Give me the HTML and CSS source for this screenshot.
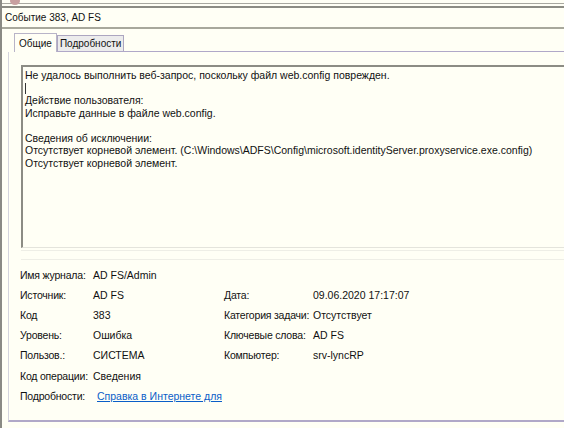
FILE: index.html
```html
<!DOCTYPE html>
<html lang="ru">
<head>
<meta charset="utf-8">
<link rel="stylesheet" href="styles.css">
</head>
<body>
<div class="window">
  <div class="topbar"><span class="dot"></span></div>
  <div class="title">Событие 383, AD FS</div>
  <div class="tabs">
    <div class="tab active">Общие</div>
    <div class="tab">Подробности</div>
  </div>
  <div class="panel">
    <div class="textbox">
      <div class="line">Не удалось выполнить веб-запрос, поскольку файл web.config поврежден.</div>
      <div class="line"><span class="caret"></span></div>
      <div class="line">Действие пользователя:</div>
      <div class="line">Исправьте данные в файле web.config.</div>
      <div class="line">&nbsp;</div>
      <div class="line">Сведения об исключении:</div>
      <div class="line">Отсутствует корневой элемент. (C:\Windows\ADFS\Config\microsoft.identityServer.proxyservice.exe.config)</div>
      <div class="line">Отсутствует корневой элемент.</div>
    </div>
    <div class="sep"></div>
    <div class="info">
      <div class="lbl">Имя журнала:</div><div class="val">AD FS/Admin</div><div></div><div></div>
      <div class="lbl">Источник:</div><div class="val">AD FS</div><div class="lbl">Дата:</div><div class="val">09.06.2020 17:17:07</div>
      <div class="lbl">Код</div><div class="val">383</div><div class="lbl">Категория задачи:</div><div class="val">Отсутствует</div>
      <div class="lbl">Уровень:</div><div class="val">Ошибка</div><div class="lbl">Ключевые слова:</div><div class="val">AD FS</div>
      <div class="lbl">Пользов.:</div><div class="val">СИСТЕМА</div><div class="lbl">Компьютер:</div><div class="val">srv-lyncRP</div>
      <div class="lbl">Код операции:</div><div class="val">Сведения</div><div></div><div></div>
      <div class="lbl">Подробности:</div><div class="val"><a class="link" href="#">Справка в Интернете для</a></div><div></div><div></div>
    </div>
  </div>
</div>
</body>
</html>
```
FILE: styles.css
```css
html, body {
  margin: 0;
  padding: 0;
  background: #fffff5;
  font-family: "Liberation Sans", Arial, sans-serif;
  font-size: 10.5px;
  color: #111;
  overflow: hidden;
}
.window {
  width: 564px;
  height: 428px;
  box-sizing: border-box;
  border-left: 2px solid #8a8a84;
  position: relative;
  overflow: hidden;
}
.topbar {
  height: 8px;
  border-top: 3px solid #fffff5;
  box-sizing: border-box;
  border-bottom: 2px solid #8c8c84;
  position: relative;
  box-shadow: inset 0 1px 0 #a8a8a0;
}
.dot {
  position: absolute;
  left: 8px;
  top: -6px;
  width: 10px;
  height: 8px;
  border-radius: 50%;
  background: #c8a0a0;
}
.title {
  height: 19px;
  line-height: 19px;
  padding-left: 3px;
  border-bottom: 2px solid #a8a89c;
  font-size: 10px;
}
.tabs {
  display: flex;
  align-items: flex-end;
  height: 23px;
  margin-left: 12px;
  box-sizing: border-box;
  border-bottom: 1px solid #b0a8c8;
  margin-right: -10px;
  position: relative;
}
.tab {
  height: 15px;
  line-height: 15px;
  padding: 0 2px;
  background: #ececec;
  border: 1px solid #aca6c0;
  border-bottom: none;
  font-size: 10px;
}
.tab.active {
  height: 18px;
  line-height: 20px;
  background: #fffff5;
  border-color: #b8b4c8;
  padding: 0 4px;
  margin-bottom: -1px;
  position: relative;
  z-index: 1;
}
.panel {
  margin-left: 6px;
  border-left: 1px solid #d4d4dc;
  border-bottom: 2px solid #b0a8c8;
  height: 370px;
  box-sizing: border-box;
  padding-top: 13px;
  padding-left: 12px;
}
.textbox {
  height: 183px;
  margin-right: -20px;
  box-sizing: border-box;
  border-top: 2px solid #8c8c84;
  border-left: 2px solid #8c8c84;
  border-bottom: 1px solid #e4e4dc;
  padding: 2px 0 0 2px;
}
.line {
  height: 12.5px;
  line-height: 12.5px;
  white-space: nowrap;
}
.caret {
  display: inline-block;
  width: 1px;
  height: 11px;
  background: #333;
  vertical-align: middle;
}
.sep {
  height: 8px;
  margin-right: -20px;
  border-top: 1px solid #eeeee6;
  border-bottom: 1px solid #eeeee6;
  margin-top: 2px;
}
.info {
  display: grid;
  grid-template-columns: 73px 131px 89px 1fr;
  grid-auto-rows: 20.1px;
  align-items: center;
  margin-top: 5px;
  margin-left: -1px;
}
.lbl, .val {
  white-space: nowrap;
}
.lbl {
  letter-spacing: -0.2px;
}
.link {
  color: #0a5ec8;
  text-decoration: underline;
  margin-left: 4px;
}
```
